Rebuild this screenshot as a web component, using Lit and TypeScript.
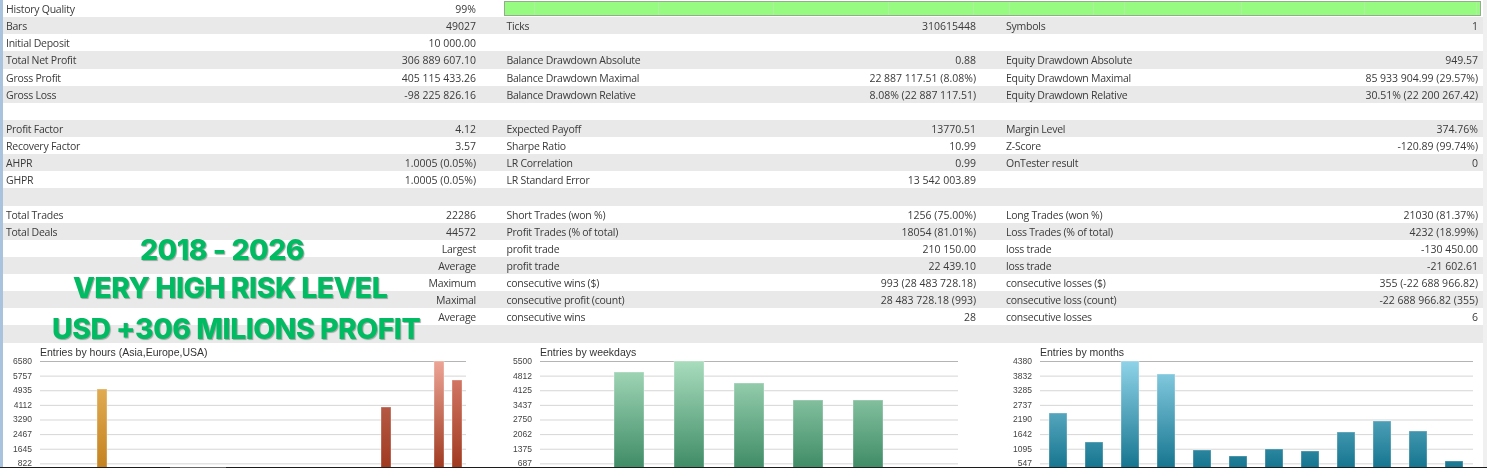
import { LitElement, css, html, svg } from 'lit';
import { customElement } from 'lit/decorators.js';

type Cell = [string, string];
// each row: label/value pairs for the three report columns
const rows: Cell[][] = [
  [['History Quality', '99%']],
  [['Bars', '49027'], ['Ticks', '310615448'], ['Symbols', '1']],
  [['Initial Deposit', '10 000.00']],
  [['Total Net Profit', '306 889 607.10'], ['Balance Drawdown Absolute', '0.88'], ['Equity Drawdown Absolute', '949.57']],
  [['Gross Profit', '405 115 433.26'], ['Balance Drawdown Maximal', '22 887 117.51 (8.08%)'], ['Equity Drawdown Maximal', '85 933 904.99 (29.57%)']],
  [['Gross Loss', '-98 225 826.16'], ['Balance Drawdown Relative', '8.08% (22 887 117.51)'], ['Equity Drawdown Relative', '30.51% (22 200 267.42)']],
  [],
  [['Profit Factor', '4.12'], ['Expected Payoff', '13770.51'], ['Margin Level', '374.76%']],
  [['Recovery Factor', '3.57'], ['Sharpe Ratio', '10.99'], ['Z-Score', '-120.89 (99.74%)']],
  [['AHPR', '1.0005 (0.05%)'], ['LR Correlation', '0.99'], ['OnTester result', '0']],
  [['GHPR', '1.0005 (0.05%)'], ['LR Standard Error', '13 542 003.89']],
  [],
  [['Total Trades', '22286'], ['Short Trades (won %)', '1256 (75.00%)'], ['Long Trades (won %)', '21030 (81.37%)']],
  [['Total Deals', '44572'], ['Profit Trades (% of total)', '18054 (81.01%)'], ['Loss Trades (% of total)', '4232 (18.99%)']],
  [['', 'Largest'], ['profit trade', '210 150.00'], ['loss trade', '-130 450.00']],
  [['', 'Average'], ['profit trade', '22 439.10'], ['loss trade', '-21 602.61']],
  [['', 'Maximum'], ['consecutive wins ($)', '993 (28 483 728.18)'], ['consecutive losses ($)', '355 (-22 688 966.82)']],
  [['', 'Maximal'], ['consecutive profit (count)', '28 483 728.18 (993)'], ['consecutive loss (count)', '-22 688 966.82 (355)']],
  [['', 'Average'], ['consecutive wins', '28'], ['consecutive losses', '6']],
];

// tick positions inside the quality bar, in px from the bar's left edge
const qualityTicks = [29, 153, 268, 383, 468, 504, 588, 619, 736, 859, 971];

interface Chart {
  title: string;
  labels: string[];
  width: number;
  barW: number;
  bars: [number, number][]; // x, top inside plot
  top: string;
  bottom: string;
}

const charts: Chart[] = [
  {
    title: 'Entries by hours (Asia,Europe,USA)',
    labels: ['6580', '5757', '4935', '4112', '3290', '2467', '1645', '822'],
    width: 426,
    barW: 10,
    bars: [[57, 28], [341, 46], [394, 0], [412, 19]],
    top: '',
    bottom: '',
  },
  {
    title: 'Entries by weekdays',
    labels: ['5500', '4812', '4125', '3437', '2750', '2062', '1375', '687'],
    width: 418,
    barW: 30,
    bars: [[74, 11], [134, 0], [194, 22], [253, 39], [313, 39]],
    top: '#a8dcbd',
    bottom: '#3f8c66',
  },
  {
    title: 'Entries by months',
    labels: ['4380', '3832', '3285', '2737', '2190', '1642', '1095', '547'],
    width: 433,
    barW: 18,
    bars: [[9, 52], [45, 81], [81, 0], [117, 13], [153, 89], [189, 95], [225, 88], [261, 90], [297, 71], [333, 60], [369, 70], [405, 100]],
    top: '#8fd3e8',
    bottom: '#16758f',
  },
];

const hourColors: [string, string][] = [
  ['#eab964', '#c4821f'],
  ['#c4705f', '#a03a20'],
  ['#eda596', '#a03a20'],
  ['#dc8271', '#a03a20'],
];

const PLOT_H = 107;
const STEP = 14.62;

@customElement('app-root')
export class AppRoot extends LitElement {
  renderChart(c: Chart, chartIdx: number) {
    const plotW = c.width;
    return html`
      <div class="chart">
        <div class="chart-title">${c.title}</div>
        <div class="chart-body">
          <div class="axis">${c.labels.map((l) => html`<span>${l}</span>`)}</div>
          <svg class="plot" width=${plotW} height=${PLOT_H} viewBox="0 0 ${plotW} ${PLOT_H}">
            <defs>
              ${c.bars.map((_, i) => {
                const cols = chartIdx === 0 ? hourColors[i] : [c.top, c.bottom];
                return svg`<linearGradient id="g${chartIdx}-${i}" gradientUnits="userSpaceOnUse" x1="0" y1="0" x2="0" y2=${PLOT_H}>
                  <stop offset="0" stop-color=${cols[0]}></stop>
                  <stop offset="1" stop-color=${cols[1]}></stop>
                </linearGradient>`;
              })}
            </defs>
            ${c.labels.map((_, i) => svg`<rect x="0" y=${i * STEP} width=${plotW} height="1" fill=${i === 0 ? '#b4b4b4' : '#d6d6d6'}></rect>`)}
            ${c.bars.map(([x, top], i) => svg`<rect x=${x} y=${top} width=${c.barW} height=${PLOT_H - top} fill="url(#g${chartIdx}-${i})" stroke="#fff" stroke-opacity="0.35"></rect>`)}
          </svg>
        </div>
      </div>
    `;
  }

  // words in the value column use the tighter label spacing
  renderCell(cell?: Cell) {
    const value = cell?.[1] ?? '';
    return html`
      <div class="cell">
        <span class="label">${cell?.[0] ?? ''}</span>
        <span class=${/\d/.test(value) ? '' : 'label'}>${value}</span>
      </div>
    `;
  }

  render() {
    return html`
      <div class="sheet">
        <div class="report">
          ${rows.map((row, i) => html`
            <div class="row ${i % 2 ? 'odd' : ''}">
              ${i === 0
                ? html`
                    ${this.renderCell(row[0])}
                    <div class="quality">
                      ${qualityTicks.map((t) => html`<i style="left:${t}px"></i>`)}
                    </div>
                  `
                : [0, 1, 2].map((n) => this.renderCell(row[n]))}
            </div>
          `)}
          <div class="row odd"></div>
          <div class="promo">
            <div class="line-a">2018 - 2026</div>
            <div class="line-b">VERY HIGH RISK LEVEL</div>
            <div class="line-c">USD +306 MILIONS PROFIT</div>
          </div>
        </div>
        <div class="charts">
          ${charts.map((c, i) => this.renderChart(c, i))}
        </div>
      </div>
      <div class="baseline"></div>
    `;
  }

  static styles = css`
    :host {
      display: block;
      width: 1487px;
      height: 468px;
      overflow: hidden;
      position: relative;
      background: #f0f0f0;
      font-family: 'Open Sans', 'Liberation Sans', sans-serif;
      font-size: 10.5px;
      color: #3a3a3a;
      filter: blur(0.4px);
    }
    .sheet {
      margin-left: 2px;
      width: 1480px;
      height: 468px;
      background: #fff;
      border-left: 1px solid #a9c2de;
      box-shadow: -2px 0 0 #a9c2de;
    }
    .report {
      position: relative;
    }
    .row {
      display: grid;
      grid-template-columns: 473px 500px 1fr;
      height: 17.14px;
      align-items: center;
    }
    .row.odd {
      background: #e9e9e9;
    }
    .cell {
      display: flex;
      justify-content: space-between;
      white-space: nowrap;
      padding: 1px 0 0 3px;
      box-sizing: border-box;
    }
    .label {
      letter-spacing: -0.25px;
    }
    .row > .cell:nth-child(2) {
      padding-left: 30.5px;
    }
    .row > .cell:nth-child(3) {
      padding-left: 30px;
      padding-right: 5px;
    }
    .quality {
      grid-column: 2 / 4;
      position: relative;
      height: 15px;
      margin-left: 28px;
      margin-right: 2px;
      background: #96fb80;
      border: 1px solid #94ab8e;
      box-sizing: border-box;
    }
    .quality i {
      position: absolute;
      top: 0;
      bottom: 0;
      width: 1px;
      background: #acf29c;
    }
    .promo {
      position: absolute;
      left: 0;
      top: 232px;
      display: flex;
      flex-direction: column;
      align-items: flex-start;
      white-space: nowrap;
      font-family: 'Inter', 'Liberation Sans', sans-serif;
      font-weight: 800;
      font-size: 28.4px;
      line-height: 35px;
      letter-spacing: -0.5px;
      color: #00bb62;
      text-shadow: 1px 1px 1px #9aa69f;
    }
    .line-a {
      margin-left: 137px;
    }
    .line-b {
      margin: 3px 0 0 70px;
    }
    .line-c {
      margin: 6px 0 0 49px;
    }
    .charts {
      display: grid;
      grid-template-columns: 500px 500px 1fr;
    }
    .chart {
      padding-top: 4px;
    }
    .chart-title {
      margin-left: 37px;
      font-family: 'Liberation Sans', sans-serif;
      font-size: 10.5px;
      line-height: 11px;
      color: #333;
    }
    .chart-body {
      display: flex;
      margin-top: 3px;
    }
    .axis {
      width: 37px;
      flex: none;
      display: flex;
      flex-direction: column;
      box-sizing: border-box;
      padding-right: 8px;
      margin-top: -6.5px;
      text-align: right;
      font-family: 'Liberation Sans', sans-serif;
      font-size: 8.5px;
      color: #444;
    }
    .axis span {
      height: 14.62px;
      line-height: 14.62px;
    }
    .plot {
      display: block;
    }
    .baseline {
      position: absolute;
      left: 0;
      right: 0;
      bottom: 0;
      height: 1.5px;
      background: linear-gradient(to right, #1c1c1c 170px, #666 170px, #666 226px, #1c1c1c 226px);
    }
  `;
}

declare global {
  interface HTMLElementTagNameMap {
    'app-root': AppRoot;
  }
}
